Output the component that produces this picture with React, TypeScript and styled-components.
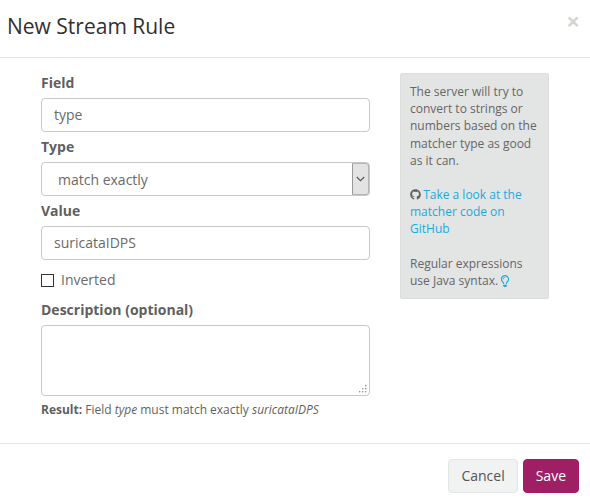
import React from 'react';
import styled, { createGlobalStyle } from 'styled-components';
import { FaGithub, FaRegLightbulb } from 'react-icons/fa';

const GlobalStyle = createGlobalStyle`
  html, body {
    margin: 0;
    padding: 0;
    background: #fff;
    font-family: "Open Sans", "Liberation Sans", sans-serif;
    font-size: 14px;
    color: #5f5f5f;
  }
  * {
    box-sizing: border-box;
  }
`;

const Modal = styled.div`
  width: 590px;
  height: 502px;
  display: flex;
  flex-direction: column;
  background: #fff;
`;

const Header = styled.header`
  height: 58px;
  flex: none;
  display: flex;
  align-items: flex-start;
  justify-content: space-between;
  padding: 11px 10px 0 7px;
  border-bottom: 1px solid #e5e5e5;
`;

const Title = styled.h2`
  margin: 0;
  font-size: 21px;
  font-weight: 400;
  line-height: 30px;
  color: #303030;
`;

const CloseButton = styled.button`
  border: 0;
  padding: 0;
  background: none;
  font-family: "Open Sans", sans-serif;
  font-size: 24px;
  font-weight: 700;
  line-height: 19px;
  color: #d5d5d5;
`;

const Body = styled.div`
  flex: 1;
  display: flex;
  align-items: flex-start;
  padding: 15px 41px 0;
`;

const Form = styled.form`
  width: 329px;
  flex: none;
  display: flex;
  flex-direction: column;
`;

const Label = styled.label`
  display: block;
  height: 25px;
  font-size: 14px;
  font-weight: 700;
  line-height: 19px;
  color: #5f5f5f;
`;

const TextInput = styled.input`
  display: block;
  width: 100%;
  height: 34px;
  padding: 5px 12px 7px;
  border: 1px solid #c8c8c8;
  border-radius: 4px;
  background: #fff;
  font: inherit;
  line-height: 20px;
  color: #6a6a6a;
  margin-bottom: 5px;
  outline: none;
`;

const SelectWrap = styled.div`
  position: relative;
  height: 34px;
  margin-bottom: 5px;
`;

const Select = styled.select`
  display: block;
  width: 100%;
  height: 34px;
  padding: 6px 12px 6px 16px;
  border: 1px solid #c8c8c8;
  border-radius: 4px;
  background: #fff;
  font: inherit;
  color: #6a6a6a;
  appearance: none;
  outline: none;
`;

const SelectArrow = styled.span`
  position: absolute;
  top: 1px;
  right: 1px;
  width: 17px;
  height: 32px;
  display: flex;
  align-items: center;
  justify-content: center;
  background: #e3e3e3;
  border: 1px solid #b5b5b5;
  border-left-color: #999;
  border-radius: 0 3px 3px 0;
  pointer-events: none;

  svg {
    display: block;
  }
`;

const CheckRow = styled.label`
  display: flex;
  align-items: center;
  height: 24px;
  margin-top: 3px;
  margin-bottom: 8px;
  color: #6a6a6a;
  line-height: 20px;
`;

const CheckBox = styled.input`
  appearance: none;
  width: 13px;
  height: 13px;
  margin: 0 7px 0 0;
  border: 1px solid #333;
  background: #fff;
`;

const AreaWrap = styled.div`
  position: relative;
  height: 71px;
  margin-bottom: 5px;
`;

const TextArea = styled.textarea`
  display: block;
  width: 100%;
  height: 71px;
  padding: 6px 12px;
  border: 1px solid #c8c8c8;
  border-radius: 4px;
  background: #fff;
  font: inherit;
  margin: 0;
  outline: none;
  resize: none;
`;

const ResizeGrip = styled.svg`
  position: absolute;
  right: 3px;
  bottom: 3px;
  pointer-events: none;
`;

const Result = styled.p`
  margin: 0;
  font-size: 12px;
  line-height: 17px;
  color: #5f5f5f;
`;

const Hint = styled.aside`
  width: 149px;
  height: 226px;
  flex: none;
  margin: 0 0 0 30px;
  padding: 9px;
  background: #e3e4e4;
  border: 1px solid #dcdddd;
  border-radius: 2px;
  font-size: 12px;
  line-height: 17.2px;
  color: #666;
`;

const HintBlock = styled.p`
  margin: 0 0 17px;
`;

const HintLink = styled.a`
  color: #16ace3;
  text-decoration: none;
`;

const GithubIcon = styled(FaGithub)`
  vertical-align: -1px;
  margin-right: -1px;
  color: #5f5f5f;
`;

const BulbIcon = styled(FaRegLightbulb)`
  vertical-align: -2px;
  margin-left: -2px;
  color: #16ace3;
`;

const Footer = styled.footer`
  height: 59px;
  flex: none;
  display: flex;
  align-items: flex-start;
  justify-content: flex-end;
  gap: 5px;
  padding: 15px 11px 0 0;
  border-top: 1px solid #e5e5e5;
`;

const Button = styled.button<{ $primary?: boolean }>`
  height: 34px;
  padding: 6px 12px;
  border: 1px solid ${(p) => (p.$primary ? '#a01f62' : '#e3e5e5')};
  border-radius: 4px;
  background: ${(p) => (p.$primary ? '#9e1f63' : '#f1f2f2')};
  color: ${(p) => (p.$primary ? '#fff' : '#555')};
  font: inherit;
  line-height: 20px;
`;

const App = () => {
  return (
    <>
      <GlobalStyle />
      <Modal>
        <Header>
          <Title>New Stream Rule</Title>
          <CloseButton type="button">×</CloseButton>
        </Header>
        <Body>
          <Form>
            <Label>Field</Label>
            <TextInput defaultValue="type" />
            <Label>Type</Label>
            <SelectWrap>
              <Select defaultValue="exact">
                <option value="exact">match exactly</option>
              </Select>
              <SelectArrow>
                <svg width="9" height="6" viewBox="0 0 9 6" fill="none" stroke="#555" strokeWidth="1.1">
                  <path d="M0.8 1 L4.5 4.7 L8.2 1" />
                </svg>
              </SelectArrow>
            </SelectWrap>
            <Label>Value</Label>
            <TextInput defaultValue="suricataIDPS" />
            <CheckRow>
              <CheckBox type="checkbox" />
              Inverted
            </CheckRow>
            <Label>Description (optional)</Label>
            <AreaWrap>
              <TextArea />
              <ResizeGrip width="8" height="8" viewBox="0 0 8 8" fill="#999">
                <rect x="6" y="0" width="1.4" height="1.4" />
                <rect x="3" y="3" width="1.4" height="1.4" />
                <rect x="6" y="3" width="1.4" height="1.4" />
                <rect x="0" y="6" width="1.4" height="1.4" />
                <rect x="3" y="6" width="1.4" height="1.4" />
                <rect x="6" y="6" width="1.4" height="1.4" />
              </ResizeGrip>
            </AreaWrap>
            <Result>
              <strong>Result:</strong> Field <em>type</em> must match exactly <em>suricataIDPS</em>
            </Result>
          </Form>
          <Hint>
            <HintBlock>The server will try to convert to strings or numbers based on the matcher type as good as it can.</HintBlock>
            <HintBlock>
              <GithubIcon size={11} /> <HintLink href="#">Take a look at the matcher code on GitHub</HintLink>
            </HintBlock>
            <HintBlock>
              Regular expressions use Java syntax. <BulbIcon size={12} />
            </HintBlock>
          </Hint>
        </Body>
        <Footer>
          <Button type="button">Cancel</Button>
          <Button type="button" $primary>Save</Button>
        </Footer>
      </Modal>
    </>
  );
};

export default App;
